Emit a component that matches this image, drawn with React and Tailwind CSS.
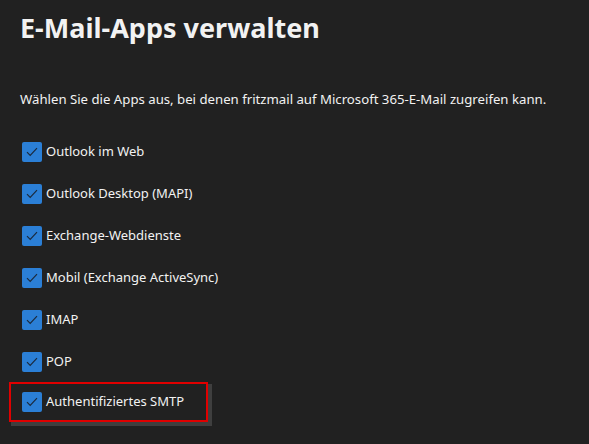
import React from 'react';

const apps = [
    'Outlook im Web',
    'Outlook Desktop (MAPI)',
    'Exchange-Webdienste',
    'Mobil (Exchange ActiveSync)',
    'IMAP',
    'POP',
];

function Box() {
    return (
        <span className="w-5 h-5 rounded-[2px] bg-[#2b7fd6] flex items-center justify-center shrink-0">
            <svg width="12" height="10" viewBox="0 0 12 10" fill="none">
                <path d="M1 5.2 L4.2 8.4 L11 1.2" stroke="#1b2a3d" strokeWidth="1.2" />
            </svg>
        </span>
    );
}

export default function App() {
    return (
        <div className="w-[589px] h-[444px] bg-[#212121] text-[#f2f2f2] overflow-hidden font-['Noto_Sans',sans-serif]">
            <h1 className="pl-5 pt-[10px] text-[27px] font-bold leading-[36px]">E-Mail-Apps verwalten</h1>
            <p className="pl-5 mt-[44px] text-[13.2px] leading-[18px]">
                Wählen Sie die Apps aus, bei denen fritzmail auf Microsoft 365-E-Mail zugreifen kann.
            </p>
            <ul className="mt-[34px] flex flex-col gap-[22px] pl-[22px]">
                {apps.map(a => (
                    <li key={a} className="flex items-center gap-[4px] h-5 text-[13px]">
                        <Box />
                        <span>{a}</span>
                    </li>
                ))}
            </ul>
            <div className="ml-[9px] mt-[10px] w-[199px] h-[40px] border-2 border-[#e00000] shadow-[3px_3px_0_1px_#3f3f3f] flex items-center gap-[4px] pl-[11px] text-[13px]">
                <Box />
                <span>Authentifiziertes SMTP</span>
            </div>
        </div>
    );
}
